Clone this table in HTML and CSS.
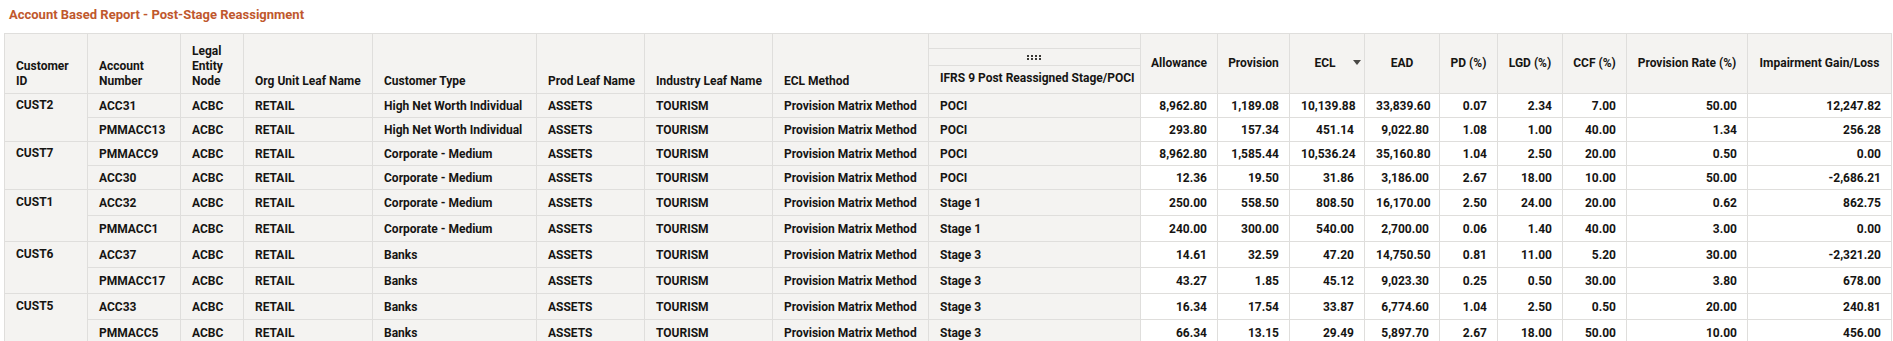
FILE: index.html
```html
<!DOCTYPE html>
<html>
<head>
<meta charset="utf-8">
<link rel="stylesheet" href="styles.css">
</head>
<body>
<div class="page">
  <div class="title">Account Based Report - Post-Stage Reassignment</div>
  <table class="grid">
    <colgroup>
      <col style="width:83px"><col style="width:93px"><col style="width:63px"><col style="width:129px">
      <col style="width:164px"><col style="width:108px"><col style="width:128px"><col style="width:156px">
      <col style="width:212px"><col style="width:77px"><col style="width:72px"><col style="width:75px">
      <col style="width:75px"><col style="width:58px"><col style="width:65px"><col style="width:64px">
      <col style="width:121px"><col style="width:144px">
    </colgroup>
    <thead>
      <tr class="hrow">
        <th class="lbl">Customer<br>ID</th>
        <th class="lbl">Account<br>Number</th>
        <th class="lbl">Legal<br>Entity<br>Node</th>
        <th class="lbl">Org Unit Leaf Name</th>
        <th class="lbl">Customer Type</th>
        <th class="lbl">Prod Leaf Name</th>
        <th class="lbl">Industry Leaf Name</th>
        <th class="lbl">ECL Method</th>
        <th class="stack">
          <div class="s1"></div>
          <div class="s2"><svg width="15" height="5" viewBox="0 0 15 5"><g fill="#3a3936"><rect x="0" y="0" width="2" height="2"/><rect x="4" y="0" width="2" height="2"/><rect x="8" y="0" width="2" height="2"/><rect x="12" y="0" width="2" height="2"/><rect x="0" y="3" width="2" height="2"/><rect x="4" y="3" width="2" height="2"/><rect x="8" y="3" width="2" height="2"/><rect x="12" y="3" width="2" height="2"/></g></svg></div>
          <div class="s3">IFRS 9 Post Reassigned Stage/POCI</div>
        </th>
        <th class="msr">Allowance</th>
        <th class="msr">Provision</th>
        <th class="msr sorted">ECL<span class="sort"></span></th>
        <th class="msr">EAD</th>
        <th class="msr">PD (%)</th>
        <th class="msr">LGD (%)</th>
        <th class="msr">CCF (%)</th>
        <th class="msr">Provision Rate (%)</th>
        <th class="msr">Impairment Gain/Loss</th>
      </tr>
    </thead>
    <tbody>
      <tr class="r24">
        <td class="lc grp" rowspan="2">CUST2</td><td class="lc">ACC31</td><td class="lc">ACBC</td><td class="lc">RETAIL</td><td class="lc">High Net Worth Individual</td><td class="lc">ASSETS</td><td class="lc">TOURISM</td><td class="lc">Provision Matrix Method</td><td class="lc">POCI</td>
        <td class="n">8,962.80</td><td class="n">1,189.08</td><td class="n">10,139.88</td><td class="n">33,839.60</td><td class="n">0.07</td><td class="n">2.34</td><td class="n">7.00</td><td class="n">50.00</td><td class="n">12,247.82</td>
      </tr>
      <tr class="r24">
        <td class="lc">PMMACC13</td><td class="lc">ACBC</td><td class="lc">RETAIL</td><td class="lc">High Net Worth Individual</td><td class="lc">ASSETS</td><td class="lc">TOURISM</td><td class="lc">Provision Matrix Method</td><td class="lc">POCI</td>
        <td class="n">293.80</td><td class="n">157.34</td><td class="n">451.14</td><td class="n">9,022.80</td><td class="n">1.08</td><td class="n">1.00</td><td class="n">40.00</td><td class="n">1.34</td><td class="n">256.28</td>
      </tr>
      <tr class="r24">
        <td class="lc grp" rowspan="2">CUST7</td><td class="lc">PMMACC9</td><td class="lc">ACBC</td><td class="lc">RETAIL</td><td class="lc">Corporate - Medium</td><td class="lc">ASSETS</td><td class="lc">TOURISM</td><td class="lc">Provision Matrix Method</td><td class="lc">POCI</td>
        <td class="n">8,962.80</td><td class="n">1,585.44</td><td class="n">10,536.24</td><td class="n">35,160.80</td><td class="n">1.04</td><td class="n">2.50</td><td class="n">20.00</td><td class="n">0.50</td><td class="n">0.00</td>
      </tr>
      <tr class="r24">
        <td class="lc">ACC30</td><td class="lc">ACBC</td><td class="lc">RETAIL</td><td class="lc">Corporate - Medium</td><td class="lc">ASSETS</td><td class="lc">TOURISM</td><td class="lc">Provision Matrix Method</td><td class="lc">POCI</td>
        <td class="n">12.36</td><td class="n">19.50</td><td class="n">31.86</td><td class="n">3,186.00</td><td class="n">2.67</td><td class="n">18.00</td><td class="n">10.00</td><td class="n">50.00</td><td class="n">-2,686.21</td>
      </tr>
      <tr class="r26">
        <td class="lc grp" rowspan="2">CUST1</td><td class="lc">ACC32</td><td class="lc">ACBC</td><td class="lc">RETAIL</td><td class="lc">Corporate - Medium</td><td class="lc">ASSETS</td><td class="lc">TOURISM</td><td class="lc">Provision Matrix Method</td><td class="lc">Stage 1</td>
        <td class="n">250.00</td><td class="n">558.50</td><td class="n">808.50</td><td class="n">16,170.00</td><td class="n">2.50</td><td class="n">24.00</td><td class="n">20.00</td><td class="n">0.62</td><td class="n">862.75</td>
      </tr>
      <tr class="r26">
        <td class="lc">PMMACC1</td><td class="lc">ACBC</td><td class="lc">RETAIL</td><td class="lc">Corporate - Medium</td><td class="lc">ASSETS</td><td class="lc">TOURISM</td><td class="lc">Provision Matrix Method</td><td class="lc">Stage 1</td>
        <td class="n">240.00</td><td class="n">300.00</td><td class="n">540.00</td><td class="n">2,700.00</td><td class="n">0.06</td><td class="n">1.40</td><td class="n">40.00</td><td class="n">3.00</td><td class="n">0.00</td>
      </tr>
      <tr class="r26">
        <td class="lc grp" rowspan="2">CUST6</td><td class="lc">ACC37</td><td class="lc">ACBC</td><td class="lc">RETAIL</td><td class="lc">Banks</td><td class="lc">ASSETS</td><td class="lc">TOURISM</td><td class="lc">Provision Matrix Method</td><td class="lc">Stage 3</td>
        <td class="n">14.61</td><td class="n">32.59</td><td class="n">47.20</td><td class="n">14,750.50</td><td class="n">0.81</td><td class="n">11.00</td><td class="n">5.20</td><td class="n">30.00</td><td class="n">-2,321.20</td>
      </tr>
      <tr class="r26">
        <td class="lc">PMMACC17</td><td class="lc">ACBC</td><td class="lc">RETAIL</td><td class="lc">Banks</td><td class="lc">ASSETS</td><td class="lc">TOURISM</td><td class="lc">Provision Matrix Method</td><td class="lc">Stage 3</td>
        <td class="n">43.27</td><td class="n">1.85</td><td class="n">45.12</td><td class="n">9,023.30</td><td class="n">0.25</td><td class="n">0.50</td><td class="n">30.00</td><td class="n">3.80</td><td class="n">678.00</td>
      </tr>
      <tr class="r26">
        <td class="lc grp" rowspan="2">CUST5</td><td class="lc">ACC33</td><td class="lc">ACBC</td><td class="lc">RETAIL</td><td class="lc">Banks</td><td class="lc">ASSETS</td><td class="lc">TOURISM</td><td class="lc">Provision Matrix Method</td><td class="lc">Stage 3</td>
        <td class="n">16.34</td><td class="n">17.54</td><td class="n">33.87</td><td class="n">6,774.60</td><td class="n">1.04</td><td class="n">2.50</td><td class="n">0.50</td><td class="n">20.00</td><td class="n">240.81</td>
      </tr>
      <tr class="r26">
        <td class="lc">PMMACC5</td><td class="lc">ACBC</td><td class="lc">RETAIL</td><td class="lc">Banks</td><td class="lc">ASSETS</td><td class="lc">TOURISM</td><td class="lc">Provision Matrix Method</td><td class="lc">Stage 3</td>
        <td class="n">66.34</td><td class="n">13.15</td><td class="n">29.49</td><td class="n">5,897.70</td><td class="n">2.67</td><td class="n">18.00</td><td class="n">50.00</td><td class="n">10.00</td><td class="n">456.00</td>
      </tr>
    </tbody>
  </table>
</div>
</body>
</html>
```

FILE: styles.css
```css
html, body {
  margin: 0;
  padding: 0;
  overflow: hidden;
  background: #ffffff;
}

.page {
  padding: 0 4px;
  font-family: Roboto, "Liberation Sans", sans-serif;
  font-weight: 700;
  font-size: 12px;
  color: #161513;
}

.title {
  height: 33px;
  box-sizing: border-box;
  padding: 6px 0 0 5px;
  font-size: 13px;
  line-height: 17px;
  color: #c0582d;
}

.grid {
  border-collapse: collapse;
  table-layout: fixed;
  width: 1888px;
}

.grid th,
.grid td {
  border: 1px solid #dfdedc;
  overflow: hidden;
  white-space: nowrap;
}

.grid th {
  background: #f4f3f1;
  font-weight: 700;
  line-height: 15px;
  height: 55px;
}

.grid th.lbl {
  text-align: left;
  vertical-align: bottom;
  padding: 0 8px 4px 11px;
}

.grid th.msr {
  text-align: center;
  vertical-align: middle;
  padding: 0 6px;
}

.grid th.sorted {
  position: relative;
  padding-right: 10px;
}

.sort {
  position: absolute;
  right: 3px;
  top: 26px;
  width: 0;
  height: 0;
  border-left: 4.5px solid transparent;
  border-right: 4.5px solid transparent;
  border-top: 5px solid #4a4946;
}

.grid th.stack {
  padding: 0;
  vertical-align: top;
}

.s1 {
  height: 14px;
  border-bottom: 1px solid #dfdedc;
}

.s2 {
  height: 16px;
  border-bottom: 1px solid #dfdedc;
  display: flex;
  align-items: center;
  justify-content: center;
}

.s2 svg {
  display: block;
}

.s3 {
  height: 24px;
  display: flex;
  align-items: flex-end;
  padding: 0 8px 4px 11px;
  box-sizing: border-box;
  text-align: left;
}

.grid td {
  padding: 0 10px 0 11px;
  vertical-align: middle;
}

.grid tr.r24 td {
  height: 23px;
}

.grid tr.r26 td {
  height: 25px;
}

.grid td.lc {
  background: #f4f3f1;
  text-align: left;
}

.grid td.grp {
  vertical-align: top;
  line-height: 23px;
}

.grid tr.r26 td.grp {
  line-height: 25px;
}

.grid td.n {
  background: #ffffff;
  text-align: right;
}
```
